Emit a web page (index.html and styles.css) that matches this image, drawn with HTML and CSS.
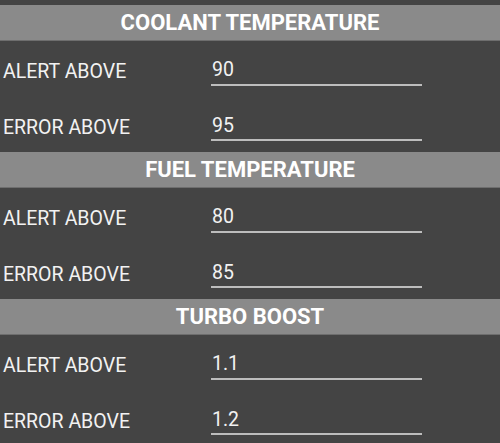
FILE: index.html
```html
<!DOCTYPE html>
<html>
<head>
<meta charset="utf-8">
<link rel="stylesheet" href="styles.css">
</head>
<body>
<div class="page">
  <section class="section">
    <div class="header">COOLANT TEMPERATURE</div>
    <div class="row"><span class="label">ALERT ABOVE</span><span class="field">90</span></div>
    <div class="row"><span class="label">ERROR ABOVE</span><span class="field">95</span></div>
  </section>
  <section class="section">
    <div class="header">FUEL TEMPERATURE</div>
    <div class="row"><span class="label">ALERT ABOVE</span><span class="field">80</span></div>
    <div class="row"><span class="label">ERROR ABOVE</span><span class="field">85</span></div>
  </section>
  <section class="section">
    <div class="header">TURBO BOOST</div>
    <div class="row"><span class="label">ALERT ABOVE</span><span class="field">1.1</span></div>
    <div class="row"><span class="label">ERROR ABOVE</span><span class="field">1.2</span></div>
  </section>
</div>
</body>
</html>
```
FILE: styles.css
```css
html, body {
  margin: 0;
  padding: 0;
  background: #444444;
  overflow: hidden;
}
.page {
  width: 500px;
  height: 443px;
  padding-top: 5px;
  box-sizing: border-box;
  background: #444444;
  font-family: Roboto, "Liberation Sans", sans-serif;
  color: #f2f2f2;
}
.section {
  display: flex;
  flex-direction: column;
  height: 147px;
}
.header {
  height: 36px;
  flex: none;
  background: #8a8a8a;
  color: #ffffff;
  font-weight: 700;
  font-size: 22px;
  display: flex;
  align-items: center;
  justify-content: center;
  border-bottom: 1px solid #6e6e6e;
  box-sizing: border-box;
}
.row {
  height: 55.5px;
  flex: none;
  display: flex;
  align-items: flex-start;
}
.label {
  width: 211px;
  padding-left: 3px;
  box-sizing: border-box;
  font-size: 19.5px;
  line-height: 20px;
  margin-top: 21px;
}
.field {
  width: 211px;
  font-size: 19.5px;
  line-height: 20px;
  margin-top: 19px;
  padding-left: 1px;
  border-bottom: 2px solid #bdbdbd;
  box-sizing: border-box;
  height: 25.5px;
}
```
